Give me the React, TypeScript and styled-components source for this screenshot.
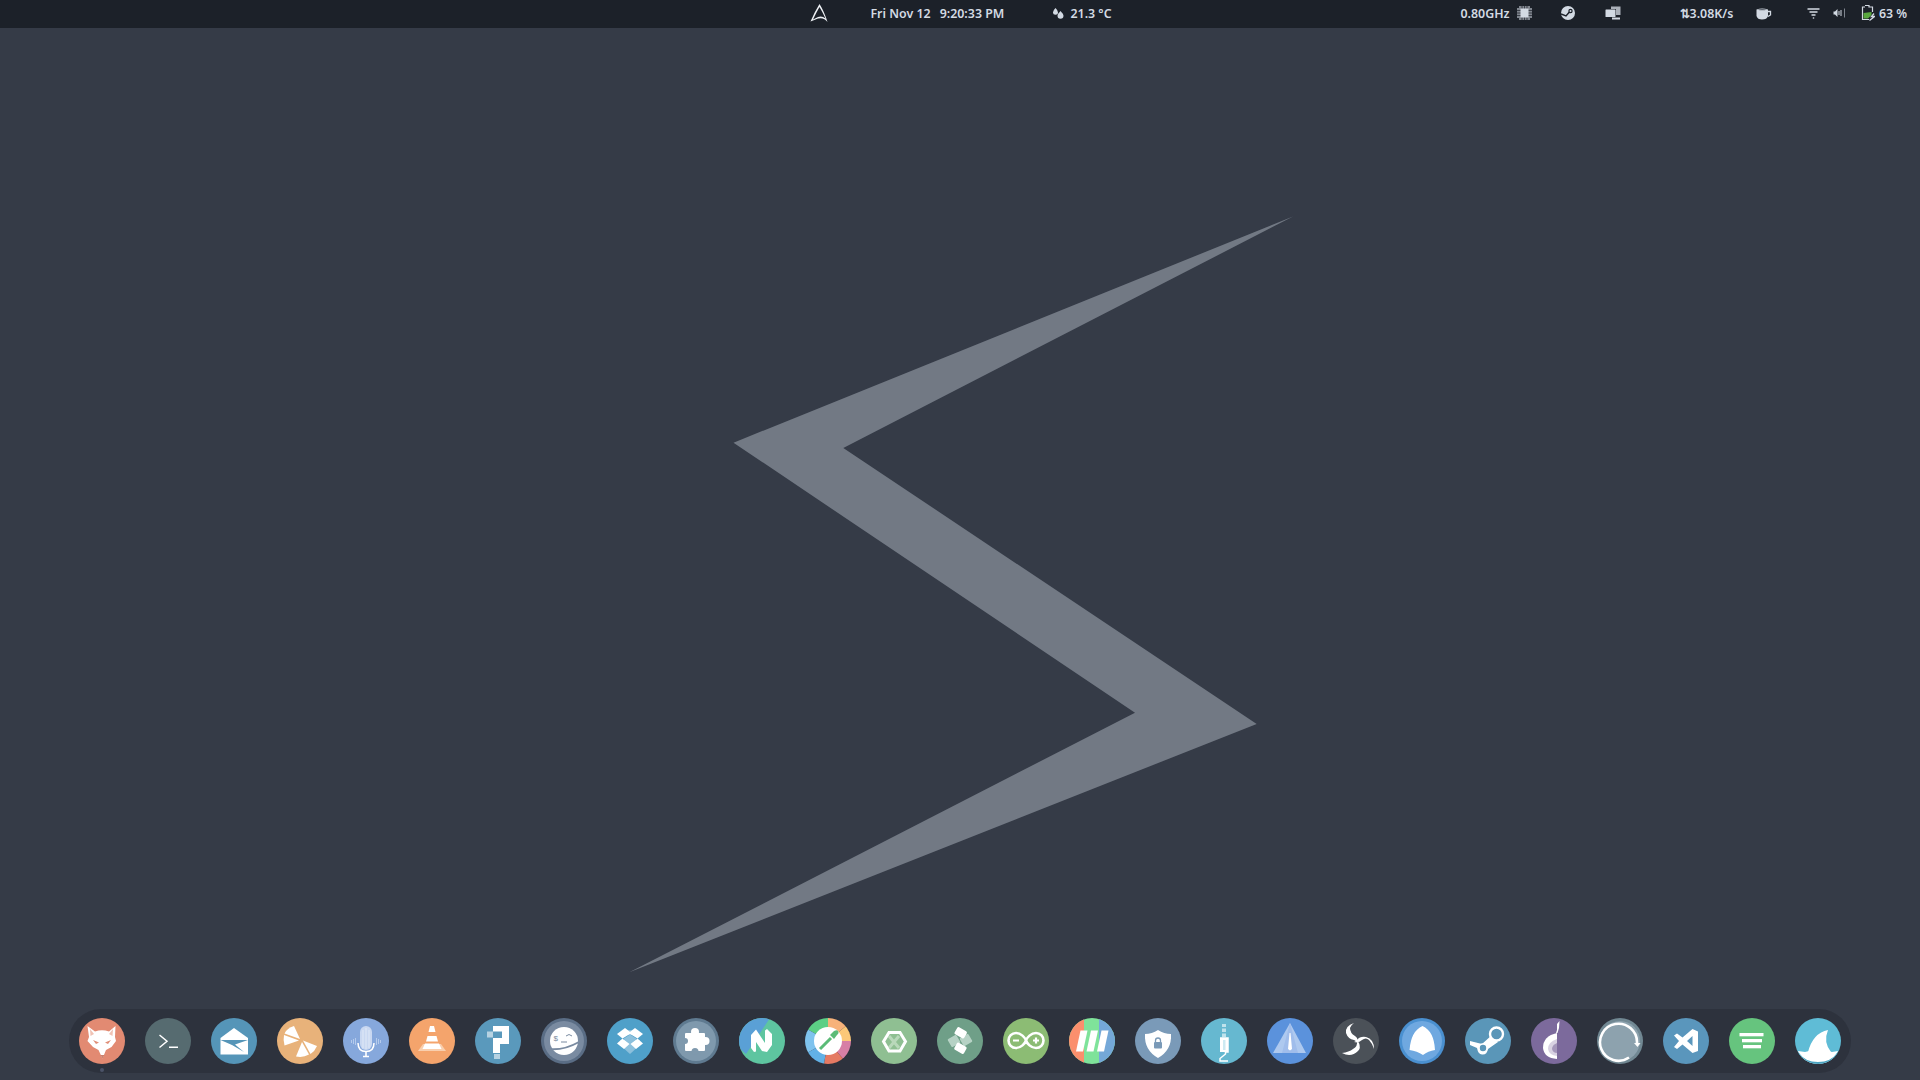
import React from "react";
import styled, { createGlobalStyle } from "styled-components";

const Global = createGlobalStyle`
  html, body { margin: 0; padding: 0; height: 100%; overflow: hidden; background: #353b47; }
  #root { height: 100%; }
`;

const Screen = styled.div`
  width: 1920px;
  height: 1080px;
  display: flex;
  flex-direction: column;
  background: #353b47;
  font-family: "Noto Sans", "Open Sans", sans-serif;
`;

const TopBar = styled.header`
  height: 28px;
  box-sizing: border-box;
  padding-bottom: 2px;
  flex: none;
  display: flex;
  align-items: center;
  background: #1c2129;
  color: #d3dae3;
  font-size: 12.4px;
  font-weight: 600;
`;

const BarItem = styled.div<{ $ml: number; $w: number }>`
  margin-left: ${(p) => p.$ml}px;
  width: ${(p) => p.$w}px;
  flex: none;
  display: flex;
  align-items: center;
  justify-content: center;
  white-space: nowrap;
`;

const Desktop = styled.main`
  position: relative;
  flex: 1;
  display: flex;
  flex-direction: column;
  align-items: center;
  justify-content: flex-end;
  padding-bottom: 7px;
`;

const Wallpaper = styled.svg`
  position: absolute;
  left: 0;
  top: 0;
  width: 1920px;
  height: 1052px;
`;

const Dock = styled.nav`
  position: relative;
  display: flex;
  gap: 20px;
  padding: 9px 10px;
  border-radius: 32px;
  background: #2d323d;
`;

const DockEntry = styled.div`
  position: relative;
  width: 46px;
  height: 46px;
`;

const RunningDot = styled.span`
  position: absolute;
  left: 21px;
  bottom: -8px;
  width: 4px;
  height: 4px;
  border-radius: 50%;
  background: #4b5368;
`;

const AppIcon = styled.svg`
  display: block;
  width: 46px;
  height: 46px;
  border-radius: 50%;
`;

const rad = (d: number) => (d * Math.PI) / 180;
const sector = (cx: number, cy: number, r: number, a: number, b: number) => {
  const x0 = cx + r * Math.cos(rad(a));
  const y0 = cy + r * Math.sin(rad(a));
  const x1 = cx + r * Math.cos(rad(b));
  const y1 = cy + r * Math.sin(rad(b));
  return `M${cx} ${cy}L${x0.toFixed(2)} ${y0.toFixed(2)}A${r} ${r} 0 0 1 ${x1.toFixed(2)} ${y1.toFixed(2)}Z`;
};

const W = "#fff";

const Fox = () => (
  <AppIcon viewBox="0 0 46 46">
    <rect width="46" height="46" fill="#e28a72" />
    <path d="M8.500 8L16 13.500Q23 11 30 13.500L36.500 8L36 19L37 23L32.500 29L27 32L23.500 40.500L19.500 32L14 29L8.500 23L10 19Z" fill={W} />
    <path d="M11 11L15 16L11.500 18ZM34 11L30 16L33.500 18Z" fill="#f0c2b4" />
    <path d="M14 22L20 24.500L17 26ZM32 22L26 24.500L29 26Z" fill="#e08f78" />
    <path d="M21.500 37L23.500 40.500L25.500 37Z" fill="#c9826f" />
  </AppIcon>
);

const Terminal = () => (
  <AppIcon viewBox="0 0 46 46">
    <rect width="46" height="46" fill="#566b70" />
    <path d="M14.500 17L22 23.300L14.500 29.500" fill="none" stroke={W} strokeWidth="1.500" />
    <path d="M24 29.300H33" stroke={W} strokeWidth="1.500" />
  </AppIcon>
);

const Mail = () => (
  <AppIcon viewBox="0 0 46 46">
    <rect width="46" height="46" fill="#5595b8" />
    <path d="M9.500 20L23 10L37 20V22L9.500 22Z" fill={W} />
    <path d="M9.500 22H37V36.500H9.500Z" fill={W} />
    <path d="M9.500 22H37L24 26.500L33 34L21 27Z" fill="#5595b8" />
  </AppIcon>
);

const Citrus = () => (
  <AppIcon viewBox="0 0 46 46">
    <rect width="46" height="46" fill="#e8b27a" />
    <path d="M23 21L7.500 15.500Q10 10 17 8Z" fill={W} />
    <path d="M22 22.500L7 17Q6 22 7.500 27.500Z" fill={W} />
    <path d="M25 24L19 38.500Q26 40 32 36.500Z" fill={W} />
    <path d="M26 22.500L40 28Q38 33 33.500 36Z" fill={W} />
  </AppIcon>
);

const Mic = () => (
  <AppIcon viewBox="0 0 46 46">
    <rect width="46" height="46" fill="#86a8dc" />
    <g stroke="#b5cbec" strokeWidth="1">
      <path d="M8.500 22V25M10.500 21V26M12.500 20V27M33.500 20V27M35.500 21V26M37.500 22V25" />
    </g>
    <rect x="17" y="8" width="12" height="24" rx="6" fill="#c9d8f1" />
    <path d="M20 12V30M23 10V31M26 12V30" stroke="#e0e9f7" strokeWidth="1" />
    <path d="M15 25Q15 33.500 23 33.500Q31 33.500 31 25" fill="none" stroke={W} strokeWidth="1.500" />
    <path d="M23 33V38M20 38.500H26" stroke={W} strokeWidth="1.600" />
  </AppIcon>
);

const Vlc = () => (
  <AppIcon viewBox="0 0 46 46">
    <rect width="46" height="46" fill="#f4a46c" />
    <path d="M9 33L14 26H32L37 33Z" fill="#f9cfae" />
    <path d="M21 8H25L26.500 14H19.500Z" fill={W} />
    <path d="M18.500 18H27.500L29 23.500H17Z" fill={W} />
    <path d="M16 25.500H30L32.500 31H13.500Z" fill={W} />
  </AppIcon>
);

const Query = () => (
  <AppIcon viewBox="0 0 46 46">
    <rect width="46" height="46" fill="#5a99bc" />
    <path d="M12 8H34V26H25V35H18V20H27V13.500H18V8Z" fill={W} />
    <rect x="12" y="13.500" width="6" height="6" fill="#b6d2e2" />
    <rect x="19" y="36" width="6" height="5" fill="#b6d2e2" />
  </AppIcon>
);

const Face = () => (
  <AppIcon viewBox="0 0 46 46">
    <rect width="46" height="46" fill="#5a6d85" />
    <circle cx="23" cy="23" r="20" fill="#7a8ba1" />
    <circle cx="23" cy="23" r="14" fill={W} />
    <path d="M7 31Q22 33 38 24" fill="none" stroke="#7a8ba1" strokeWidth="2" />
    <text x="12.500" y="23" fontSize="8" fill="#7a8ba1" fontFamily="Liberation Sans, sans-serif">$</text>
    <path d="M25 18Q28 15 31 18M20 24H26" fill="none" stroke="#7a8ba1" strokeWidth="1" />
  </AppIcon>
);

const Dropbox = () => (
  <AppIcon viewBox="0 0 46 46">
    <rect width="46" height="46" fill="#4fa0c9" />
    <path d="M13 27L23 36L33 27V22H13Z" fill="#8cc0dc" />
    <path d="M23 18L15 13L23 12L31 13Z" fill="#8cc0dc" />
    <path d="M18 10L24.500 15L15.500 20.500L10 16Z" fill={W} />
    <path d="M28 10L36 16L30.500 20.500L21.500 15Z" fill={W} />
    <path d="M10 25.500L15.500 20.500L22.500 26L17 31Z" fill={W} />
    <path d="M36 25.500L30.500 20.500L23.500 26L29 31Z" fill={W} />
    <path d="M16 21L23 16.500L30 21L23 25.500Z" fill="#8cc0dc" />
  </AppIcon>
);

const Puzzle = () => (
  <AppIcon viewBox="0 0 46 46">
    <rect width="46" height="46" fill="#5f7a90" />
    <circle cx="23" cy="23" r="20" fill="#7f99ad" />
    <rect x="12" y="15" width="20" height="18" rx="1" fill={W} />
    <circle cx="22" cy="14" r="4" fill={W} />
    <circle cx="32.500" cy="23" r="4" fill={W} />
    <circle cx="22" cy="33.500" r="3.500" fill="#7f99ad" />
    <circle cx="12" cy="23" r="3" fill="#7f99ad" />
  </AppIcon>
);

const Noted = () => (
  <AppIcon viewBox="0 0 46 46">
    <rect width="46" height="46" fill="#5ec5a0" />
    <path d="M0 0H31L7 36L0 30Z" fill="#5aa0d6" />
    <path d="M12 17L17 11.500L26 25V12.500L28 11L33 16V27L28 34L23 33L17 24V33.500L15 34L12 30Z" fill={W} />
  </AppIcon>
);

const Picker = () => {
  const parts: [number, number, string][] = [
    [-150, -90, "#5ccf85"],
    [-90, -40, "#f7b27a"],
    [-40, 0, "#fcc878"],
    [0, 50, "#d77fa5"],
    [50, 100, "#e57a63"],
    [100, 150, "#62b1e6"],
    [150, 210, "#7fc3ee"],
  ];
  return (
    <AppIcon viewBox="0 0 46 46">
      {parts.map(([a, b, c]) => (
        <path key={a} d={sector(23, 23, 34, a, b)} fill={c} />
      ))}
      <circle cx="23" cy="23" r="14" fill={W} />
      <path d="M15 31L26 20" stroke="#5bbb77" strokeWidth="3" />
      <path d="M25 17L29 13Q32 11.500 33 13Q34.500 15 32 17L29 21Z" fill="#5bbb77" />
    </AppIcon>
  );
};

const HexX = () => (
  <AppIcon viewBox="0 0 46 46">
    <rect width="46" height="46" fill="#8fbf92" />
    <path d="M18 18L28 30M28 18L18 30" stroke="#b9d8ba" strokeWidth="3" />
    <path d="M12.500 23.500L18 14.500H29L34.500 23.500L29 33H18Z" fill="none" stroke={W} strokeWidth="3" />
  </AppIcon>
);

const Bandage = () => (
  <AppIcon viewBox="0 0 46 46">
    <rect width="46" height="46" fill="#6f9f88" />
    <rect x="12" y="18.500" width="10" height="9" rx="1" transform="rotate(-30 17 23)" fill="#b6d2c5" />
    <rect x="24" y="17.500" width="10" height="9" rx="1" transform="rotate(-30 29 22)" fill="#b6d2c5" />
    <rect x="18" y="10.500" width="11" height="8" rx="1.500" transform="rotate(30 23 15)" fill={W} />
    <rect x="18" y="26" width="11" height="8" rx="1.500" transform="rotate(30 23 30)" fill={W} />
  </AppIcon>
);

const Arduino = () => (
  <AppIcon viewBox="0 0 46 46">
    <rect width="46" height="46" fill="#8cbc74" />
    <path
      d="M13 15a7.500 7.500 0 1 0 0 15c5 0 9-4.500 10-7.500c1-3 5-7.500 10-7.500a7.500 7.500 0 1 1 0 15c-5 0-9-4.500-10-7.500c-1-3-5-7.500-10-7.500z"
      fill="none"
      stroke={W}
      strokeWidth="2.600"
    />
    <path d="M10 22.500H16M30 22.500H36M33 19.500V25.500" stroke={W} strokeWidth="2.200" />
  </AppIcon>
);

const Stripes = () => (
  <AppIcon viewBox="0 0 46 46">
    <rect width="46" height="46" fill="#7fe39a" />
    <rect width="15" height="46" fill="#fb8f6d" />
    <rect x="30" width="16" height="46" fill="#74a8d8" />
    <path d="M11.500 12.500H18.500L14 33.500H7Z" fill={W} />
    <path d="M22 12.500H29L24.500 33.500H17.500Z" fill={W} />
    <path d="M32.500 12.500H39.500L35 33.500H28Z" fill={W} />
  </AppIcon>
);

const Shield = () => (
  <AppIcon viewBox="0 0 46 46">
    <rect width="46" height="46" fill="#7a9ab8" />
    <path d="M23 12Q29 16 36 16Q37 32 23 40Q9 32 10 16Q17 16 23 12Z" fill={W} />
    <rect x="19" y="24" width="8" height="6.500" rx="1" fill="#7a9ab8" />
    <path d="M20.500 24V22.500A2.500 2.500 0 0 1 25.500 22.500V24" fill="none" stroke="#7a9ab8" strokeWidth="1.300" />
  </AppIcon>
);

const Jack = () => (
  <AppIcon viewBox="0 0 46 46">
    <rect width="46" height="46" fill="#66b8d0" />
    <path d="M21 6H25V9H21ZM21 10.500H25V14H21ZM21 15.500H25V19H21Z" fill="#bfe2ec" />
    <path d="M19 20H27V34H24.500V36L19 40.500V43H27" fill="none" stroke={W} strokeWidth="1.500" />
    <rect x="19" y="20" width="8" height="14" fill={W} />
    <rect x="22" y="22" width="2.500" height="10" fill="#cdeaf2" />
  </AppIcon>
);

const Nav = () => (
  <AppIcon viewBox="0 0 46 46">
    <rect width="46" height="46" fill="#5b92dc" />
    <path d="M23 5L39 35H6Z" fill="#aec9ef" />
    <path d="M23 5L31 35H15Z" fill="#a0bdeb" />
    <path d="M22.500 15H23.500L25 31L23 32.500L21 31Z" fill={W} />
  </AppIcon>
);

const Obs = () => (
  <AppIcon viewBox="0 0 46 46">
    <rect width="46" height="46" fill="#4b5158" />
    <g fill={W}>
      <path d="M21 5Q12 8 13 15Q15 21 21 22Q24 23 24 25Q26 21 22 18Q17 15 17 10Q18 7 21 5Z" />
      <path d="M41 31Q41 21 33 19Q27 18 24 22Q22 24 21 24Q26 25 29 22Q33 19 36 22Q39 25 41 31Z" />
      <path d="M9 35Q18 40 25 33Q28 30 26 25Q25 23 24 23Q25 28 20 31Q16 34 9 35Z" />
    </g>
  </AppIcon>
);

const Drop = () => (
  <AppIcon viewBox="0 0 46 46">
    <rect width="46" height="46" fill="#4a90d0" />
    <circle cx="23" cy="23" r="20" fill="#6fa8e0" />
    <path d="M23.500 8Q35 13 36 32Q29 33 24 37Q18 33 10.500 32Q12 13 23.500 8Z" fill={W} />
  </AppIcon>
);

const Steam = () => (
  <AppIcon viewBox="0 0 46 46">
    <rect width="46" height="46" fill="#5a96b8" />
    <path d="M5 23L17 26L27 17L33 24L23 31Q22 37 17 36.500Q13 36 12 30L5 27Z" fill={W} />
    <circle cx="31.500" cy="16" r="6.500" fill="#5a96b8" stroke={W} strokeWidth="2.400" />
    <circle cx="31.500" cy="16" r="4" fill="#5a96b8" />
    <circle cx="18" cy="30" r="4" fill="#5a96b8" stroke={W} strokeWidth="1.600" />
  </AppIcon>
);

const Tor = () => (
  <AppIcon viewBox="0 0 46 46">
    <rect width="46" height="46" fill="#7c6a9c" />
    <path d="M26 15Q12 18 12 30Q13 40 26 41Z" fill={W} />
    <path d="M26 21Q17 24 17 31Q18 37 26 38Z" fill="#d8d2e2" />
    <path d="M26 25Q21 27 21 31Q22 35 26 35Z" fill="#a497ba" />
    <path d="M26 12L26 6L28.500 3L28 10L26.500 15H25Z" fill={W} />
  </AppIcon>
);

const Refresh = () => (
  <AppIcon viewBox="0 0 46 46">
    <rect width="46" height="46" fill="#718893" />
    <circle cx="23" cy="23" r="20" fill="#8da2ae" />
    <path d="M40 25A18.500 18.500 0 1 0 32 39.500" fill="none" stroke={W} strokeWidth="2.600" />
    <path d="M37 25H43.500L40.500 29Z" fill={W} />
  </AppIcon>
);

const VSCode = () => (
  <AppIcon viewBox="0 0 46 46">
    <rect width="46" height="46" fill="#5a96bc" />
    <path d="M29.500 11L35 13.500V33L29.500 35L19.500 26.500L14 31L11 29L16 23L11 17.500L14 15.500L19.500 19.500ZM29.500 18L24 23L29.500 28Z" fill={W} fillRule="evenodd" />
  </AppIcon>
);

const Lines = () => (
  <AppIcon viewBox="0 0 46 46">
    <rect width="46" height="46" fill="#66c47e" />
    <rect x="10.500" y="15" width="24" height="3.300" fill={W} />
    <rect x="13" y="21" width="20" height="3.300" fill={W} />
    <rect x="14" y="27" width="18" height="3.300" fill={W} />
  </AppIcon>
);

const Shark = () => (
  <AppIcon viewBox="0 0 46 46">
    <rect width="46" height="46" fill="#5fbcd6" />
    <path d="M33 12Q18 15 13 34H36Q28 24 33 12Z" fill={W} />
    <path d="M3 33L10 34L14 33L18 34L23 33L28 34L32 33L37 34L43 33Q37 46 23 46Q8 46 3 33Z" fill={W} />
    <path d="M4 35Q10 44 23 44Q36 44 42 35L46 46H0Z" fill="#4aa3c0" />
  </AppIcon>
);

const icons = [
  Fox, Terminal, Mail, Citrus, Mic, Vlc, Query, Face, Dropbox, Puzzle, Noted, Picker, HexX, Bandage,
  Arduino, Stripes, Shield, Jack, Nav, Obs, Drop, Steam, Tor, Refresh, VSCode, Lines, Shark,
];

const C = "#d3dae3";

const LogoGlyph = () => (
  <svg width="18" height="20" viewBox="0 0 18 20">
    <path
      d="M9.500 1Q5 8 0.500 18.500L8 15.500Q14 14 17.500 19Q14 8 9.500 1ZM9.500 4Q6 10 3 16.500L8 14Q12 12.500 15.500 15.500Q12.500 9 9.500 4Z"
      fill="#eef1f5"
      fillRule="evenodd"
    />
  </svg>
);
const Drops = () => (
  <svg width="12" height="12" viewBox="0 0 12 12" fill={C}>
    <path d="M3.500 1Q6 3.500 6 5.200A2.500 2.500 0 0 1 1 5.200Q1 3.500 3.500 1Z" />
    <path d="M8.500 4Q11.500 7 11.500 8.800A3 3 0 0 1 5.500 8.800Q5.500 7 8.500 4Z" />
  </svg>
);
const Cpu = () => (
  <svg width="15" height="14" viewBox="0 0 15 14">
    <rect x="0" y="2" width="15" height="10" fill="#7f858e" />
    <rect x="2" y="0" width="11" height="14" fill="#7f858e" />
    <path d="M0 4.500H15M0 7H15M0 9.500H15M5 0V14M7.500 0V14M10 0V14" stroke="#1c2129" strokeWidth="0.700" />
    <rect x="3.500" y="2.500" width="8" height="9" fill={C} />
  </svg>
);
const SteamSmall = () => (
  <svg width="14" height="14" viewBox="0 0 14 14">
    <circle cx="7" cy="7" r="7" fill={C} />
    <path d="M0 8L5 10L8 6.500L11 6" stroke="#1c2129" strokeWidth="1.400" fill="none" />
    <circle cx="9.500" cy="5" r="2.200" fill="#1c2129" />
    <circle cx="9.500" cy="5" r="1" fill={C} />
  </svg>
);
const Windows = () => (
  <svg width="16" height="14" viewBox="0 0 16 14">
    <path d="M6 0.500H15.500V9H11V3H6Z" fill="#aab0b9" />
    <rect x="0.500" y="3.500" width="10" height="7.500" rx="0.500" fill={C} />
    <rect x="7" y="11.500" width="8" height="2" fill={C} />
  </svg>
);
const Cup = () => (
  <svg width="16" height="13" viewBox="0 0 16 13">
    <path d="M0.500 2.500Q6 0.500 12 2.500V9Q11 12.500 6 12.500Q1.500 12.500 0.500 9Z" fill={C} />
    <path d="M1.500 2.700Q6 1.200 11 2.700Q6 4 1.500 2.700Z" fill="#5a606a" />
    <path d="M12 4.500H14.500V8L12 9.500" fill="none" stroke={C} strokeWidth="1.300" />
  </svg>
);
const Wifi = () => (
  <svg width="13" height="11" viewBox="0 0 13 11" stroke={C} strokeWidth="1.300">
    <path d="M0.500 1H12.500M2.500 4H10.500M4.500 7H8.500" />
    <path d="M5.800 10H7.200" />
  </svg>
);
const Volume = () => (
  <svg width="13" height="10" viewBox="0 0 13 10">
    <path d="M0.500 3.500H2L4.500 1V9L2 6.500H0.500Z" fill={C} />
    <path d="M6 3V7M8 2V8" stroke={C} strokeWidth="1" />
    <path d="M11.500 0.500V9.500" stroke="#7d838c" strokeWidth="1" />
  </svg>
);
const Battery = () => (
  <svg width="14" height="16" viewBox="0 0 14 16">
    <path d="M4 0.500H8V2H11.500V7M8 14.500H1.500V2H4" fill="none" stroke={C} strokeWidth="1.200" />
    <path d="M2.500 13.500V8L10.500 7V10L7 13.500Z" fill="#5aa83f" />
    <path d="M8.500 15.500L13.500 11.500H10.500L13 8.500" fill="none" stroke={C} strokeWidth="1.300" />
  </svg>
);

export default function App() {
  return (
    <Screen>
      <Global />
      <TopBar>
        <BarItem $ml={810} $w={18}><LogoGlyph /></BarItem>
        <BarItem $ml={43} $w={59}>Fri Nov 12</BarItem>
        <BarItem $ml={10} $w={64}>9:20:33 PM</BarItem>
        <BarItem $ml={48} $w={12}><Drops /></BarItem>
        <BarItem $ml={6} $w={42}>21.3 °C</BarItem>
        <BarItem $ml={349} $w={48}>0.80GHz</BarItem>
        <BarItem $ml={8} $w={15}><Cpu /></BarItem>
        <BarItem $ml={29} $w={14}><SteamSmall /></BarItem>
        <BarItem $ml={30} $w={16}><Windows /></BarItem>
        <BarItem $ml={58} $w={55}>⇅3.08K/s</BarItem>
        <BarItem $ml={22} $w={16}><Cup /></BarItem>
        <BarItem $ml={35} $w={13}><Wifi /></BarItem>
        <BarItem $ml={13} $w={13}><Volume /></BarItem>
        <BarItem $ml={15} $w={14}><Battery /></BarItem>
        <BarItem $ml={4} $w={28}>63 %</BarItem>
      </TopBar>
      <Desktop>
        <Wallpaper viewBox="0 28 1920 1052">
          <polygon points="1293,216.500 733.500,442.700 1135,712.700 629.300,972.300 1256.700,724 843.300,448" fill="#727984" />
        </Wallpaper>
        <Dock>
          {icons.map((Icon, i) => (
            <DockEntry key={i}>
              <Icon />
              {i === 0 && <RunningDot />}
            </DockEntry>
          ))}
        </Dock>
      </Desktop>
    </Screen>
  );
}
